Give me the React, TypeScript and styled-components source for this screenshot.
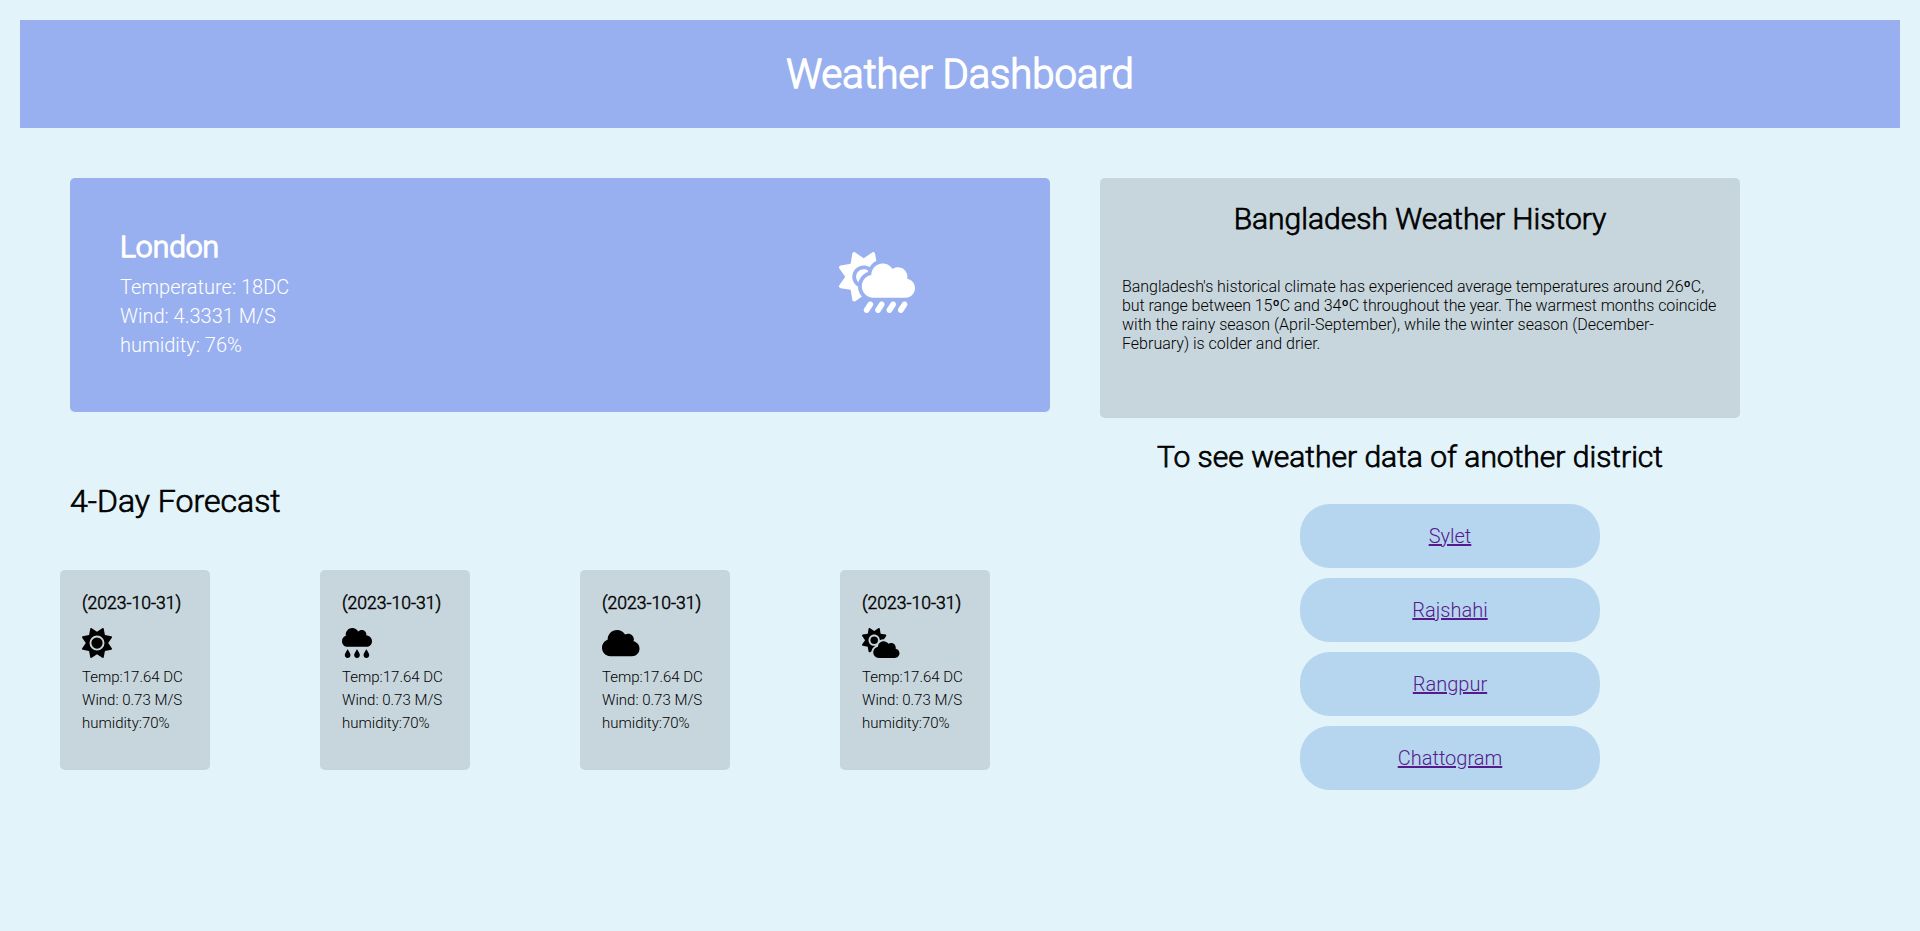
import React from "react";
import styled, { createGlobalStyle } from "styled-components";
import { FaCloud, FaCloudRain, FaCloudSun, FaCloudSunRain, FaSun } from "react-icons/fa6";

const GlobalStyle = createGlobalStyle`
  * { box-sizing: border-box; margin: 0; padding: 0; }
  body {
    background: #e2f3fa;
    color: #000;
    font-family: Roboto, sans-serif;
    font-weight: 300;
  }
  h1, h2, h3 { font-weight: 300; }
`;

const Page = styled.div`
  min-height: 931px;
  padding: 20px;
`;

const Header = styled.header`
  height: 108px;
  display: flex;
  align-items: center;
  justify-content: center;
  background: #99b0f0;
  color: #fff;
`;

const PageTitle = styled.h1`
  padding-top: 2px;
  font-size: 40px;
  line-height: 50px;
  -webkit-text-stroke: 1.4px currentColor;
`;

const Columns = styled.main`
  display: flex;
  gap: 50px;
  padding: 50px 50px 0;
`;

const MainColumn = styled.section`
  width: 980px;
`;

const SideColumn = styled.aside`
  width: 640px;
`;

const CurrentWeather = styled.div`
  display: flex;
  justify-content: space-between;
  height: 234px;
  padding: 50px 135px 50px 50px;
  border-radius: 5px;
  background: #99b0f0;
  color: #fff;
  font-size: 20px;
  line-height: 29px;
`;

const City = styled.h2`
  font-size: 30px;
  line-height: 38px;
  margin-bottom: 7px;
  -webkit-text-stroke: 1.4px currentColor;
`;

const CurrentIcon = styled(FaCloudSunRain)`
  width: 76px;
  height: 61px;
  margin-top: 24px;
`;

const ForecastTitle = styled.h2`
  margin-top: 70px;
  font-size: 32px;
  line-height: 38px;
  -webkit-text-stroke: 0.7px currentColor;
`;

const ForecastRow = styled.div`
  display: flex;
  gap: 110px;
  margin: 50px 0 0 -10px;
`;

const DayCard = styled.article<{ $iconWidth: number }>`
  width: 150px;
  height: 200px;
  padding: 22px 0 0 22px;
  border-radius: 5px;
  background: #c7d5dc;
  font-size: 15px;
  line-height: 23px;
  white-space: nowrap;

  svg {
    display: block;
    width: ${({ $iconWidth }) => $iconWidth}px;
    height: 30px;
    margin: 14px 0 8px;
  }
`;

const DayDate = styled.h3`
  font-size: 17.55px;
  line-height: 22px;
  -webkit-text-stroke: 0.5px currentColor;
`;

const HistoryCard = styled.div`
  height: 240px;
  padding: 22px;
  border-radius: 5px;
  background: #c7d5dc;
`;

const SideTitle = styled.h2<{ $gap?: boolean }>`
  font-size: 30px;
  line-height: 38px;
  text-align: center;
  -webkit-text-stroke: 0.75px currentColor;
  ${({ $gap }) => $gap && "margin: 20px 20px 0 0;"}
`;

const HistoryText = styled.p`
  margin-top: 39px;
  font-size: 16px;
  line-height: 19px;
  white-space: nowrap;
`;

const HistoryLine = styled.span<{ $tracking: number }>`
  display: block;
  letter-spacing: ${({ $tracking }) => $tracking}px;
`;

const Degree = styled.span`
  font-weight: 500;
`;

const Districts = styled.nav`
  display: flex;
  flex-direction: column;
  gap: 10px;
  width: 300px;
  margin: 28px 0 0 200px;
`;

const DistrictPill = styled.div`
  height: 64px;
  border-radius: 30px;
  background: #b6d6ef;
  text-align: center;
  font-size: 20px;
  line-height: 64px;
`;

const DistrictLink = styled.a`
  color: #551a8b;
  text-decoration: underline;
`;

const days = [
  { Icon: FaSun, width: 30 },
  { Icon: FaCloudRain, width: 30 },
  { Icon: FaCloud, width: 37.5 },
  { Icon: FaCloudSun, width: 37.5 },
];
const districts = ["Sylet", "Rajshahi", "Rangpur", "Chattogram"];

export default function App() {
  return (
    <>
      <GlobalStyle />
      <Page>
        <Header>
          <PageTitle>Weather Dashboard</PageTitle>
        </Header>
        <Columns>
          <MainColumn>
            <CurrentWeather>
              <div>
                <City>London</City>
                <p>Temperature: 18DC</p>
                <p>Wind: 4.3331 M/S</p>
                <p>humidity: 76%</p>
              </div>
              <CurrentIcon />
            </CurrentWeather>
            <ForecastTitle>4-Day Forecast</ForecastTitle>
            <ForecastRow>
              {days.map(({ Icon, width }, i) => (
                <DayCard key={i} $iconWidth={width}>
                  <DayDate>(2023-10-31)</DayDate>
                  <Icon />
                  <p>Temp:17.64 DC</p>
                  <p>Wind: 0.73 M/S</p>
                  <p>humidity:70%</p>
                </DayCard>
              ))}
            </ForecastRow>
          </MainColumn>
          <SideColumn>
            <HistoryCard>
              <SideTitle>Bangladesh Weather History</SideTitle>
              <HistoryText>
                <HistoryLine $tracking={-0.04}>
                  Bangladesh's historical climate has experienced average temperatures around 26<Degree>º</Degree>C,{" "}
                </HistoryLine>
                <HistoryLine $tracking={-0.06}>
                  but range between 15<Degree>º</Degree>C and 34<Degree>º</Degree>C throughout the year. The warmest
                  months coincide{" "}
                </HistoryLine>
                <HistoryLine $tracking={0}>
                  with the rainy season (April-September), while the winter season (December-
                </HistoryLine>
                <HistoryLine $tracking={0}>February) is colder and drier.</HistoryLine>
              </HistoryText>
            </HistoryCard>
            <SideTitle $gap>To see weather data of another district</SideTitle>
            <Districts>
              {districts.map((name) => (
                <DistrictPill key={name}>
                  <DistrictLink href="#">{name}</DistrictLink>
                </DistrictPill>
              ))}
            </Districts>
          </SideColumn>
        </Columns>
      </Page>
    </>
  );
}
